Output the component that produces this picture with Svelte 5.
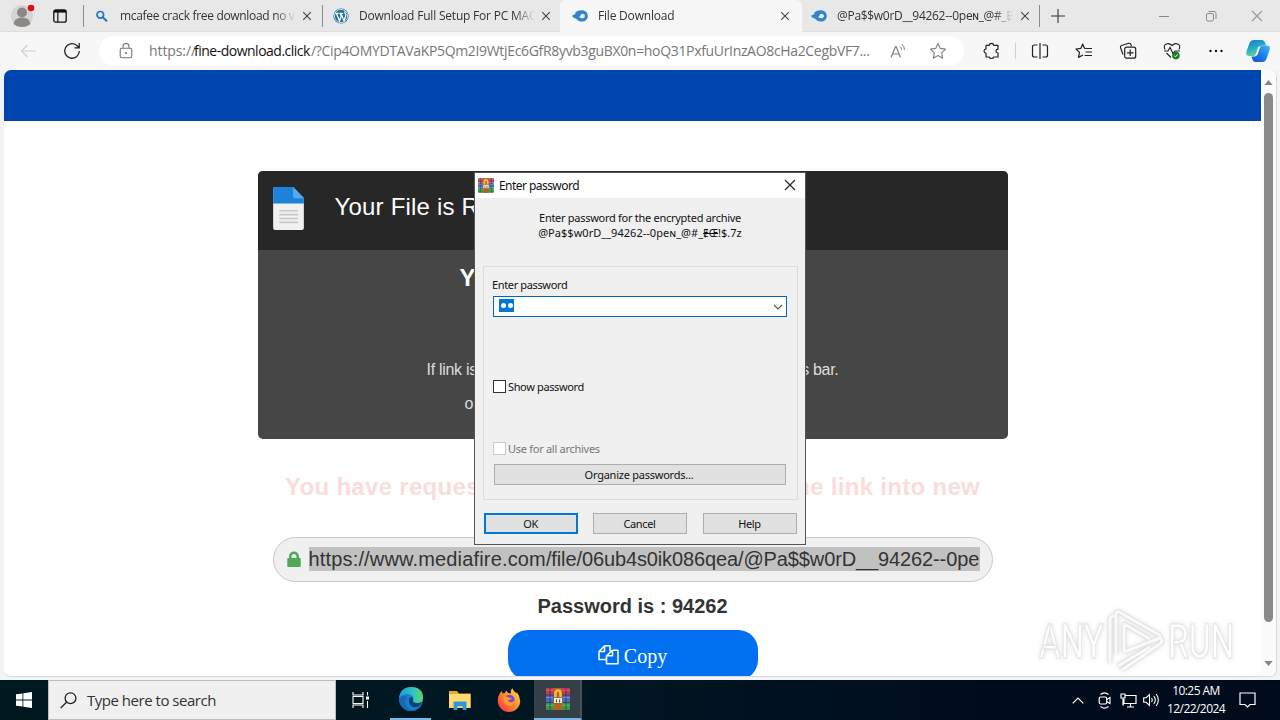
<script>
  const tabs = [
    { id: 'search', icon: 'search', title: 'mcafee crack free download no v', cls: 't1' },
    { id: 'wp', icon: 'wp', title: 'Download Full Setup For PC MAC', cls: 't2' },
    { id: 'file', icon: 'flame', title: 'File Download', cls: 't3 active' },
    { id: 'mf', icon: 'flame', title: '@Pa$$w0rD__94262--0peɴ_@#_Ɇ', cls: 't4' }
  ];
</script>

{#snippet flame()}
  <svg class="fav" viewBox="0 0 16 16"><path fill="#3184cc" d="M.6 8.800C0 8 .3 7.300 1.300 6.900L4 5.800C3 5.600 2.800 5 3.600 4.300 5 3 7 2.300 9.500 2.300c3.900 0 6.300 2.400 6.300 5.600s-2.500 5.700-5.900 5.700c-3.500 0-4.200-1.700-5.900-2.800C3.100 10.100 1.400 9.900.6 8.800Z"/><path fill="#eef6fc" d="M6.300 9c1.200-.1 1.700-.7 2.200-1.600.7-1.200 1.200-1.600 2.200-1.600 1.300 0 2.200 1 2.200 2.200s-1 2.300-2.200 2.300c-1.700 0-2.200-1-4.400-1.300Z"/></svg>
{/snippet}

{#snippet cross()}
  <svg class="x" viewBox="0 0 10 10"><path d="M1.200 1.200l7.600 7.600M8.800 1.200L1.200 8.800" stroke="#444" stroke-width="1.100" fill="none"/></svg>
{/snippet}

{#snippet books()}
  <svg class="books" viewBox="0 0 24 22">
    <rect x="0" y="0" width="24" height="6.800" rx="1" fill="#c23a4c"/><rect x="0" y="7.400" width="24" height="6.800" rx="1" fill="#4a6cc4"/><rect x="0" y="14.900" width="24" height="7" rx="1" fill="#3a9a42"/>
    <path d="M4 0v22M20 0v22" stroke="#182347" stroke-width="1.200" opacity=".5"/>
    <path d="M0 2.200h24M0 9.500h24M0 17.200h24" stroke="#fff" stroke-width=".7" opacity=".35"/>
    <rect x="8" y="0" width="8" height="22" fill="#b8601f"/>
    <path d="M9.500 11V5.500q0-3 2.500-3t2.500 3V11" fill="none" stroke="#f6bd3e" stroke-width="2.600"/>
    <rect x="7.500" y="9.500" width="9" height="6" fill="#f4e9d4" stroke="#7a5228" stroke-width=".7"/><path d="M10.400 11.500v3M13.600 11.500v3" stroke="#444" stroke-width="1"/>
  </svg>
{/snippet}

<div class="screen">
  <header class="tabstrip">
    <svg class="avatar" viewBox="0 0 24 24"><circle cx="11" cy="13" r="11" fill="#d6d4d2"/><circle cx="11" cy="9.500" r="5" fill="#8b8886"/><path d="M2.500 21q1-6.500 8.500-6.500t8.500 6.500q-3.500 3-8.500 3t-8.500-3z" fill="#8b8886"/><circle cx="20" cy="5" r="3.300" fill="#e20c18"/></svg>
    <svg class="spaces" viewBox="0 0 14 14"><rect x=".8" y=".8" width="12.400" height="12.400" rx="2" fill="none" stroke="#111" stroke-width="1.300"/><path d="M1 2.300h12" stroke="#111" stroke-width="2.600"/><path d="M4.800 3v10" stroke="#111" stroke-width="1.200"/></svg>
    <div class="tabs">
      {#each tabs as t (t.id)}
        <div class="tab {t.cls}">
          {#if t.icon === 'search'}
            <svg class="fav" viewBox="0 0 16 16"><circle cx="6.300" cy="6.800" r="3.300" fill="none" stroke="#2475c8" stroke-width="1.700"/><path d="M8.800 9.300l4.200 4" stroke="#2475c8" stroke-width="2"/></svg>
          {:else if t.icon === 'wp'}
            <svg class="fav" viewBox="0 0 16 16"><circle cx="8" cy="8" r="7.600" fill="#207196"/><circle cx="8" cy="8" r="6.600" fill="none" stroke="#eef5f8" stroke-width=".8"/><path d="M2.300 5.300h3.400M6.300 5.300h4M3.500 5.500l3 7.500L8.300 8 7.200 5.400M8 5.500l3 7.400 1.600-4.600q.7-1.800-.6-3.200-.5-1 .4-1.600" stroke="#fff" stroke-width="1.300" fill="none"/></svg>
          {:else}{@render flame()}{/if}
          <span class="title">{t.title}</span>
          {@render cross()}
        </div>
      {/each}
    </div>
    <svg class="plus" viewBox="0 0 14 14"><path d="M7 0v14M0 7h14" stroke="#333" stroke-width="1.100"/></svg>
    <div class="winctl">
      <svg viewBox="0 0 12 12"><path d="M1 6.500h10" stroke="#888"/></svg>
      <svg viewBox="0 0 12 12"><rect x="1.500" y="3.500" width="7" height="7.500" rx="1.500" fill="none" stroke="#888"/><path d="M3.500 1.500H9q2 0 2 2V9" fill="none" stroke="#888"/></svg>
      <svg viewBox="0 0 12 12"><path d="M1 1l10 10M11 1L1 11" stroke="#999" stroke-width="1.100"/></svg>
    </div>
  </header>

  <div class="toolbar">
    <svg class="back" viewBox="0 0 16 14"><path d="M15.500 7H1M7 1L1 7l6 6" fill="none" stroke="#d0d0d0" stroke-width="1.200"/></svg>
    <svg class="reload" viewBox="0 0 18 18"><path d="M16.300 9A7.300 7.300 0 1 1 13.500 3.200L16 5.500M16.200 1v4.800h-4.800" fill="none" stroke="#222" stroke-width="1.300"/></svg>
    <div class="address">
      <svg class="lock" viewBox="0 0 14 16"><rect x="1.200" y="5.200" width="11.600" height="9.600" rx="1.800" fill="none" stroke="#777" stroke-width="1.100"/><path d="M4 5V3.500a3 3 0 0 1 6 0V5" fill="none" stroke="#777" stroke-width="1.100"/><circle cx="7" cy="10" r="1" fill="#666"/></svg>
      <div class="url"><span class="u1">https://</span><b class="u2">fine-download.click</b><span class="u3">/?Cip4OMYDTAVaKP5Qm2I9WtjEc6GfR8yvb3guBX0n=hoQ31PxfuUrInzAO8cHa2CegbVF7...</span></div>
      <svg class="read" viewBox="0 0 16 16"><path d="M1 14.500L5.500 3.500h.6l4.400 11M2.500 11h6.500" fill="none" stroke="#808080" stroke-width="1.200"/><path d="M10 3.500q1.500 1 1.500 3.300M11.500 1q3 2 3 6" fill="none" stroke="#808080"/></svg>
      <svg class="star" viewBox="0 0 18 18"><path d="M9 1.500l2.300 4.900 5.200.7-3.800 3.700.9 5.400L9 13.600l-4.600 2.600.9-5.400L1.500 7.100l5.200-.7z" fill="none" stroke="#808080" stroke-width="1.100" stroke-linejoin="round"/></svg>
    </div>
    <div class="tools">
      <svg viewBox="0 0 18 18"><path d="M3 3.300h3.200q.4-2 2.300-2t2.300 2H15v3.900q-2 .2-2 1.900t2 1.900v4h-4.200q-.4 1.500-2.300 1.500T6.200 15H3v-3.700Q1 10.800 1 9.100t2-2.200z" fill="none" stroke="#222" stroke-width="1.200" stroke-linejoin="round"/></svg>
      <i></i>
      <svg viewBox="0 0 18 18"><path d="M6.500 3H3.500Q1.500 3 1.500 5v8q0 2 2 2h3M11.500 3h3q2 0 2 2v8q0 2-2 2h-3M9 1v16" fill="none" stroke="#222" stroke-width="1.200"/></svg>
      <svg viewBox="0 0 18 18"><path d="M10.500 6.500L9.500 6.200 7.700 2 5.800 6.400 1 7l3.500 3.400-1 5L8 13M10.500 6.500H17M10.500 10H17M9.500 13.500H17" fill="none" stroke="#222" stroke-width="1.200" stroke-linejoin="round"/></svg>
      <svg viewBox="0 0 18 18"><path d="M4 12.500L1.500 5.500q-.4-1.600 1-2L9.700 1.300q1.500-.3 2 1L12.500 4" fill="none" stroke="#222" stroke-width="1.200"/><rect x="5.700" y="5.200" width="11" height="11" rx="2" fill="#f7f7f7" stroke="#222" stroke-width="1.200"/><path d="M11.200 7.500v6.500M8 10.800h6.500" stroke="#222" stroke-width="1.200"/></svg>
      <svg viewBox="0 0 18 18"><path d="M2 7.500Q0 3.500 3.300 2 6.500.9 9 3.500 11.500.9 14.700 2 18 3.500 16 7.500M3.500 11l4.500 4.500M1 9h4l2-3.500 3 6 2-2.500h5" fill="none" stroke="#222" stroke-width="1.100"/><circle cx="12.900" cy="13.600" r="3.800" fill="#167d1c"/><path d="M11.200 13.700l1.300 1.200 2.200-2.500" fill="none" stroke="#fff"/></svg>
      <svg viewBox="0 0 18 18"><circle cx="3.500" cy="9" r="1.150"/><circle cx="9" cy="9" r="1.150"/><circle cx="14.500" cy="9" r="1.150"/></svg>
    </div>
    <svg class="copilot" viewBox="0 0 24 24"><defs><linearGradient id="ca" x2=".4" y2="1"><stop stop-color="#157bd0"/><stop offset=".5" stop-color="#26a5c9"/><stop offset="1" stop-color="#5ad7a0"/></linearGradient><linearGradient id="cb" x1="1" x2="0" y2="1"><stop stop-color="#43bdec"/><stop offset=".5" stop-color="#1f7cf0"/><stop offset="1" stop-color="#164ed0"/></linearGradient></defs><path fill="url(#ca)" d="M8 1h8q2.500 0 3 2.500l1 3h-4q-2 0-2.600 2l-2.200 6q-.8 2.500-3 2.500H3.500Q-.8 17 .5 12.500L3.500 4Q4.800 1 8 1z"/><path fill="url(#cb)" d="M16.500 23h-7Q7 23 6.500 20.500l-1-3h3q2 0 2.600-2L13.200 9q.8-2.500 3-2.500h4.300q4.500 0 3.100 4.500l-3 8.500Q19.400 23 16.500 23z"/><path fill="#f7f7f7" d="M12 8.500q.4-1 1.500-1h2q-1.500.5-2 2.200L12 14.500q-.6 2-2.200 2H8q1.500-.5 2-2z"/></svg>
  </div>

  <main class="frame">
    <div class="page">
      <div class="banner"></div>
      <section class="card">
        <div class="cardhead">
          <svg class="doc" viewBox="0 0 30 42"><path d="M2 0h17.500L30 11v29q0 2-2 2H2q-2 0-2-2V2q0-2 2-2z" fill="#f1f1f1"/><path d="M2 0h17.500L30 11v5H0V2q0-2 2-2z" fill="#1c82da"/><path d="M19.500 0L30 11H21q-1.500 0-1.500-1.500z" fill="#56aaf0"/><path d="M6 23.200h18.500M6 27h18.500M6 30.800h18.500M6 34.500h18.500" stroke="#c9c9c9" stroke-width="1.600"/></svg>
          <span>Your File is Ready</span>
        </div>
        <h2>Your File</h2>
        <div class="hint"><span>If link is not</span><span>address bar.</span></div>
        <p class="or">or</p>
      </section>
      <div class="notice"><span>You have requested</span><span>the link into new</span></div>
      <div class="linkbox">
        <svg viewBox="0 0 14 16"><path d="M1 7h1V5.500a5 5 0 0 1 10 0V7h1q.7 0 .7.800v7.400q0 .8-.7.800H1q-.7 0-.7-.8V7.800Q.3 7 1 7zm3.500 0h5V5.500a2.500 2.500 0 0 0-5 0z" fill="#50a757"/></svg>
        <div class="link"><span class="host">https://www.mediafire.com</span><span class="path">/file/06ub4s0ik086qea/@Pa$$w0rD__94262--0pe</span></div>
      </div>
      <p class="pw">Password is : 94262</p>
      <button class="copy"><svg viewBox="0 0 21 20"><path d="M6.500.8H12v5.500M6.500.8L1 6.500v8h7.300M6.500.8v5.700H1M14.500 5.200H20v13.600H8.500v-8zM14.500 5.200v5.600h-6" fill="none" stroke="#fff" stroke-width="1.500" stroke-linejoin="round"/></svg>Copy</button>
    </div>
    <div class="scroll">
      <svg viewBox="0 0 10 6"><path d="M0 6L5 0l5 6z" fill="#858585"/></svg>
      <div class="thumb"></div>
      <svg viewBox="0 0 10 6"><path d="M0 0l5 6 5-6z" fill="#858585"/></svg>
    </div>
  </main>

  <footer class="taskbar">
    <div class="start"><svg viewBox="0 0 16 16"><path fill="#fff" d="M0 2.300l6.500-.9v6.200H0zM7.300 1.300L16 0v7.600H7.300zM0 8.400h6.500v6.200L0 13.700zM7.300 8.400H16V16l-8.700-1.300z"/></svg></div>
    <div class="search"><svg viewBox="0 0 17 17"><circle cx="10.500" cy="6.200" r="5.400" fill="none" stroke="#222" stroke-width="1.300"/><path d="M6.700 10L.7 16" stroke="#222" stroke-width="1.300"/></svg><span>Type here to search</span></div>
    <div class="app first"><svg class="tv" viewBox="0 0 17 16"><path d="M1 0v3h10V0M1 16v-3h10v3M1 4.500h10v7H1zM15.500 0v3.500M15.500 9v7" fill="none" stroke="#fff" stroke-width="1.100"/><rect x="14" y="4.500" width="3" height="3" fill="#fff"/></svg></div>
    <div class="app on"><svg class="big" viewBox="0 0 24 24"><defs><linearGradient id="eg" x2="1"><stop stop-color="#2295d8"/><stop offset=".6" stop-color="#2fc5c4"/><stop offset="1" stop-color="#62d55c"/></linearGradient></defs><circle cx="12" cy="12" r="12" fill="#1580cd"/><path d="M0 11Q1.500 0 12.500 0 24 .5 24 10.500q0 5.500-5.500 5.500-5 0-4.500-2.500 1.500-3-1-5Q7.500 4.500 0 11z" fill="url(#eg)"/><path d="M14 13.500q-.5 2.500 4.500 2.700 2.700 0 4.500-1.400Q21 20 16.500 20.300 9.500 20 10 12.500q.5-2.300 2.500-2.500 2 .5 1.500 3.500z" fill="#0b4078"/><path d="M8 11q-4 5 1 10 5 3.500 9 1.400Q12 26 6.500 22.600-1 17 0 11q5-5 8 0z" fill="#1569b5"/></svg></div>
    <div class="app"><svg class="big" viewBox="0 0 24 24"><path d="M1 3h8l2 2.500h11.500V20H1z" fill="#e9a92b"/><path d="M1 6h21.500v14H1z" fill="#ffdc70"/><path d="M5.500 22v-8.500h13V22h-3.800v-3.800H9.300V22z" fill="#3396d8"/></svg></div>
    <div class="app"><svg class="big" viewBox="0 0 24 24"><defs><linearGradient id="ff" x1="1" x2="0" y2="1"><stop stop-color="#ffe24a"/><stop offset=".5" stop-color="#ff8a2a"/><stop offset="1" stop-color="#f5215c"/></linearGradient></defs><path d="M3 5l2-2 .5 2.500L8 5l1-2.500L11.500 5l2.500.5Q13 2 15.500.300 16.500 3.500 19 5l1-.5Q23 8 23.200 13A11.200 11 0 0 1 .8 13Q.7 8.500 3 5z" fill="url(#ff)"/><circle cx="12.300" cy="12" r="5.300" fill="#7548d6"/><path d="M7 8q3 .3 5 1.700l3 .3q-1 2-3.500 2-1 1.500 1.500 2.300 3 .4 4.500-2-.5 5.500-5.500 5.500Q5.500 16.500 7 8z" fill="#ff9b2e"/></svg></div>
    <div class="app rar">{@render books()}</div>
    <div class="tray">
      <svg class="chev" viewBox="0 0 12 7"><path d="M.7 6.300L6 1l5.300 5.300" fill="none" stroke="#fff" stroke-width="1.200"/></svg>
      <svg class="cam" viewBox="0 0 14 17"><rect x="1.200" y="5" width="7.500" height="7" rx="1.500" fill="none" stroke="#fff" stroke-width="1.200"/><path d="M8.800 7.500L12 5.500v6L8.800 9.800M2.500 2.500q4-3.300 8 0M2.500 14.500q4 3.300 8 0" fill="none" stroke="#fff" stroke-width="1.100"/></svg>
      <svg class="net" viewBox="0 0 17 15"><path d="M5.500 2.500H16v8H4V6M10.500 10.500V14M7 14h7M1 1h4v4H1zM3 5v7h1" fill="none" stroke="#fff" stroke-width="1.200"/></svg>
      <svg class="vol" viewBox="0 0 17 14"><path d="M.7 4.700h2.500L6.500 1.500v11L3.200 9.300H.7zM8.500 5q1.500 2 0 4M10.800 3.200q3 3.800 0 7.600M13.200 1q4.300 6 0 12" fill="none" stroke="#fff" stroke-width="1.100"/></svg>
      <div class="clock"><span>10:25 AM</span><span class="date">12/22/2024</span></div>
      <svg class="note" viewBox="0 0 17 16"><path d="M1 1h15v11.500h-5L8.500 15 6 12.500H1z" fill="none" stroke="#fff" stroke-width="1.200"/></svg>
    </div>
  </footer>

  <svg class="mark" viewBox="0 0 210 70">
    <g fill="#fff" stroke="#e2e2e2" stroke-width=".8">
      <text transform="translate(7 52) scale(.69 1)" font-size="48">ANY</text>
      <text transform="translate(136 52) scale(.7 1)" font-size="48">RUN</text>
    </g>
    <g fill="none" stroke-linejoin="round"><path d="M78 57V12L82 9M84 48V8q0-3 3-2l42 24M92 46V18l26 15M92 46l36-14q4 3 0 6L90 64M86 60l32-19" stroke="#dedede" stroke-width="4.500"/><path d="M78 57V12L82 9M84 48V8q0-3 3-2l42 24M92 46V18l26 15M92 46l36-14q4 3 0 6L90 64M86 60l32-19" stroke="#fafafa" stroke-width="3"/></g>
  </svg>

  <div class="dialog">
    <div class="dtitle">{@render books()}<span>Enter password</span><svg class="dx" viewBox="0 0 12 12"><path d="M1 1l10 10M11 1L1 11" stroke="#222" stroke-width="1.200"/></svg></div>
    <div class="dmsg"><span class="m1">Enter password for the encrypted archive</span><span class="m2">@Pa$$w0rD__94262--0peɴ_@#_<small>ɆŒ</small>!$.7z</span></div>
    <div class="group">
      <label class="lab" for="pw">Enter password</label>
      <div class="combo" id="pw"><span class="dots"><i></i><i></i></span><svg viewBox="0 0 10 6"><path d="M1 1l4 4 4-4" fill="none" stroke="#555" stroke-width="1.100"/></svg></div>
      <div class="check c1"><i></i><span>Show password</span></div>
      <div class="check c2"><i></i><span>Use for all archives</span></div>
      <button class="org"><span>Organize passwords...</span></button>
    </div>
    <div class="dbtns"><button class="ok">OK</button><button>Cancel</button><button class="help">Help</button></div>
  </div>
</div>

<style>
  :global(body) { margin: 0; overflow: hidden; }
  * { box-sizing: border-box; }
  svg { display: block; flex: none; }
  .screen { position: relative; width: 1280px; height: 720px; overflow: hidden; display: flex; flex-direction: column; background: #f2f4f7; font-family: "Open Sans", sans-serif; color: #222; }
  .tabstrip { height: 32px; display: flex; align-items: center; background: #e8e8e8; border-bottom: 1px solid #dedede; }
  .avatar { width: 24px; height: 24px; margin: 0 0 2px 11px; }
  .spaces { width: 14px; height: 14px; margin-left: 18px; }
  .tabs { display: flex; margin-left: 16px; height: 32px; }
  .tab { display: flex; align-items: center; position: relative; font-size: 12px; color: #333; border-left: 1px solid transparent; }
  .t1 { width: 239px; border-image: linear-gradient(transparent 6px, #8b8b8b 6px 26px, transparent 26px) 1; padding-left: 10px; }
  .t2 { width: 238px; border-image: linear-gradient(transparent 6px, #8b8b8b 6px 26px, transparent 26px) 1; padding-left: 10px; }
  .t3 { width: 242px; padding-left: 11px; background: #f7f7f7; border-radius: 6px 6px 0 0; }
  .t4 { width: 238px; padding-left: 9px; border-right: 1px solid; border-image: linear-gradient(transparent 6px, #8b8b8b 6px 26px, transparent 26px) 1; border-left-width: 0; }
  .fav { width: 16px; height: 16px; }
  .title { width: 176px; margin-left: 10px; overflow: hidden; white-space: nowrap; line-height: 20px; mask-image: linear-gradient(90deg, #000 155px, transparent 176px); }
  .t1 .title { margin-left: 10px; width: 178px; letter-spacing: -.32px; }
  .t2 .title { letter-spacing: -.2px; }
  .t3 .title { letter-spacing: -.2px; }
  .t4 .title { letter-spacing: -.3px; }
  .x { width: 10px; height: 10px; margin-left: 7px; }
  .t1 .x { margin-left: 4px; }
  .t2 .x, .t3 .x { margin-left: 6px; }
  .plus { width: 14px; height: 14px; margin-left: 11px; }
  .winctl { margin-left: auto; display: flex; gap: 34.500px; padding-right: 17px; }
  .winctl svg { width: 12px; height: 12px; }
  .toolbar { height: 38px; display: flex; align-items: center; background: #f7f7f7; }
  .back { width: 17px; height: 14px; margin-left: 20px; }
  .reload { width: 18px; height: 18px; margin-left: 26px; }
  .address { width: 865px; height: 30px; margin-left: 18px; border-radius: 15px; background: #fff; display: flex; align-items: center; padding-left: 20px; }
  .lock { width: 14px; height: 16px; }
  .url { display: flex; width: 723px; margin-left: 16px; font-size: 14px; line-height: 20px; color: #777; white-space: nowrap; }
  .url b { font-weight: 400; color: #111; }
  .u1 { width: 45px; letter-spacing: -.1px; }
  .u2 { width: 117px; letter-spacing: -.5px; }
  .u3 { letter-spacing: -.33px; }
  .read { width: 16px; height: 16px; margin-left: 18px; }
  .star { width: 18px; height: 18px; margin-left: 23px; }
  .tools { display: flex; align-items: center; margin-left: 19px; }
  .tools svg { width: 18px; height: 18px; margin-right: 26px; }
  .tools svg:first-child { margin-right: 14px; }
  .tools i { width: 1px; height: 16px; background: #d0d0d0; margin-right: 15px; }
  .copilot { width: 24px; height: 24px; margin-left: -5px; }
  .frame { width: 1273px; height: 607px; margin-left: 4px; display: flex; background: #fff; border-radius: 7px; border: 1px solid #d7d9dd; border-width: 0 1px 1px 0; overflow: hidden; }
  .page { width: 1257px; height: 606px; overflow: hidden; display: flex; flex-direction: column; align-items: center; font-family: "Liberation Sans", sans-serif; }
  .banner { width: 100%; height: 51px; flex: none; background: #0044b0; }
  .card { width: 750px; height: 268px; flex: none; margin-top: 50px; border-radius: 5px; background: #464646; color: #fff; overflow: hidden; }
  .cardhead { height: 79px; background: #272727; display: flex; padding: 16px; padding-left: 15px; font-size: 24px; letter-spacing: .2px; }
  .doc { width: 31px; height: 43px; margin-right: 31px; }
  .cardhead span { line-height: 40px; }
  h2 { margin: 14px 0 0 202px; font-size: 24px; line-height: 28px; }
  .hint { display: flex; justify-content: space-between; width: 412px; margin: 68px 0 0 169px; font-size: 16px; line-height: 20px; color: #ddd; letter-spacing: -.3px; }
  .or { margin: 14px 0 0 207px; font-size: 16px; line-height: 20px; color: #ddd; }
  .notice { display: flex; justify-content: space-between; width: 695px; flex: none; margin-top: 34px; font-size: 24px; line-height: 28px; font-weight: 700; color: #fbdcdc; letter-spacing: .3px; }
  .linkbox { width: 720px; height: 45px; flex: none; margin-top: 36px; border: 1px solid #c9c9c9; border-radius: 23px; background: #f0f0f0; display: flex; align-items: center; padding: 0 0 2px 13px; font-size: 20px; color: #333; }
  .linkbox svg { width: 14px; height: 16px; margin-right: 8px; }
  .link { width: 671px; height: 24px; line-height: 24px; background: #c1c1c1; white-space: nowrap; overflow: hidden; display: flex; }
  .host { letter-spacing: .16px; }
  .path { letter-spacing: -.12px; }
  .pw { margin: 12px 0 0; font-size: 20px; line-height: 24px; font-weight: 700; color: #333; }
  .copy { width: 250px; height: 50px; flex: none; margin-top: 12px; border: 0; border-radius: 20px; background: #0070f0; color: #fff; font: 20px "Liberation Serif", serif; display: flex; align-items: center; justify-content: center; gap: 5px; padding: 2px 0 0; }
  .copy svg { width: 21px; height: 20px; margin-bottom: 2px; }
  .scroll { width: 15px; height: 606px; display: flex; flex-direction: column; align-items: center; background: #fbfbfb; padding-top: 10px; }
  .scroll svg { width: 9px; height: 5px; }
  .thumb { width: 9px; height: 529px; margin: 8px 0 39px; border-radius: 5px; background: #8a8a8a; }
  .taskbar { height: 40px; margin-top: 3px; display: flex; background: linear-gradient(90deg, #001820, #001722 45%, #000b1c 80%); color: #fff; }
  .start { width: 48px; display: grid; place-items: center; }
  .start svg { width: 16px; height: 16px; }
  .search { width: 288px; background: #f0f0f0; border: 1px solid #bdbdbd; display: flex; align-items: center; color: #333; font-size: 15px; }
  .search svg { width: 17px; height: 17px; margin: 0 10px 0 11px; }
  .search span { letter-spacing: -.48px; }
  .app { width: 49px; display: grid; place-items: center; }
  .app.first { width: 48px; }
  .tv { width: 17px; height: 16px; }
  .app.on { width: 41px; margin: 0 4px 0 6px; border-bottom: 2px solid #76b9ed; }
  .big { width: 24px; height: 24px; }
  .app.rar { width: 48px; background: #343f47; border-bottom: 2px solid #76b9ed; border-right: 2px solid #44525b; margin-left: 1px; padding-left: 2px; }
  .books { width: 24px; height: 22px; }
  .tray { margin-left: auto; display: flex; align-items: center; padding-right: 24px; }
  .chev { width: 12px; height: 7px; margin-right: 14px; margin-left: 2px; }
  .cam { width: 14px; height: 17px; margin-right: 8px; }
  .net { width: 17px; height: 15px; margin-right: 6px; }
  .vol { width: 17px; height: 14px; margin-right: 7px; }
  .clock { display: flex; flex-direction: column; align-items: center; width: 58px; margin-right: 14px; font-size: 12px; line-height: 18px; letter-spacing: -.55px; white-space: nowrap; }
  .note { width: 17px; height: 16px; }
  .mark { position: absolute; left: 1032px; top: 606px; width: 210px; height: 70px; font-family: Roboto, sans-serif; filter: drop-shadow(0 0 2px #dcdcdc); }
  .dialog { position: absolute; left: 474px; top: 172px; width: 332px; height: 373px; background: #f0f0f0; border: 1px solid #555; display: flex; flex-direction: column; font-size: 11px; color: #111; font-family: "Noto Sans", sans-serif; letter-spacing: -.36px; }
  .dtitle { height: 25px; background: #fff; display: flex; align-items: center; padding: 0 9px 1px 3px; font-size: 12px; }
  .dtitle .books { width: 16px; height: 15px; }
  .dtitle span { margin-left: 5px; letter-spacing: -.55px; }
  .dx { width: 12px; height: 12px; margin-left: auto; }
  .dmsg { height: 68px; padding-top: 12px; display: flex; flex-direction: column; align-items: center; line-height: 15px; }
  .m1 { letter-spacing: -.28px; }
  .m2 { letter-spacing: .03px; }
  .dmsg small { font-size: 10px; text-decoration: line-through; }
  .group { height: 234px; margin: 0 7px 0 8px; border: 1px solid #dcdcdc; padding: 10px 10px 0 9px; display: flex; flex-direction: column; }
  .lab { line-height: 15px; margin-left: -1px; }
  .combo { height: 21px; margin-top: 4px; border: 1px solid #0067b8; background: #fff; display: flex; align-items: center; justify-content: space-between; padding: 0 3px 2px 5px; }
  .combo svg { width: 10px; height: 6px; margin-top: 2px; }
  .dots { display: flex; align-items: center; justify-content: center; gap: 2px; width: 15px; height: 13px; background: #0078d7; }
  .dots i { width: 5px; height: 5px; border-radius: 50%; background: #fff; }
  .check { display: flex; align-items: center; height: 15px; gap: 2px; }
  .check i { width: 13px; height: 13px; background: #fff; border: 1px solid #333; }
  .c1 { margin-top: 62px; }
  .c2 { margin-top: 47px; color: #777; letter-spacing: -.28px; }
  .c2 i { border-color: #ccc; }
  button { font: inherit; color: inherit; letter-spacing: inherit; }
  .org { margin: 8px 1px 0; height: 21px; padding: 0 2px 0 0; border: 1px solid #adadad; background: #e1e1e1; letter-spacing: -.24px; }
  .dbtns { display: flex; gap: 15px; margin: 13px 0 0 9px; }
  .dbtns button { width: 94px; height: 21px; border: 1px solid #adadad; background: #e1e1e1; padding: 0 1px 0 0; }
  .dbtns .help { margin-left: 1px; }
  .dbtns .ok { border: 2px solid #0078d7; }
  .copy { letter-spacing: 0; }
</style>
